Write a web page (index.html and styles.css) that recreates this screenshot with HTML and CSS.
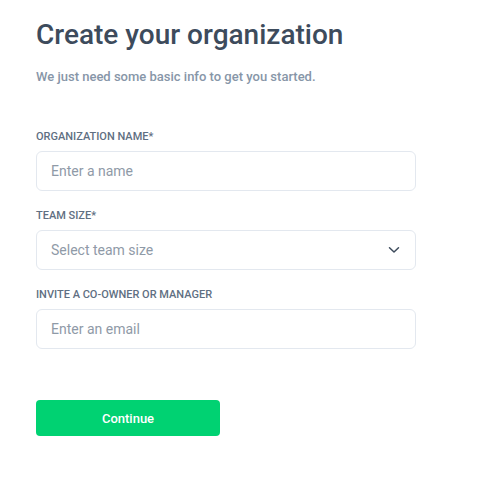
FILE: index.html
```html
<!DOCTYPE html>
<html>
<head>
<meta charset="utf-8">
<link rel="stylesheet" href="styles.css">
</head>
<body>
<main class="page">
  <h1 class="title">Create your organization</h1>
  <p class="subtitle">We just need some basic info to get you started.</p>
  <form class="form">
    <div class="field">
      <label class="label">Organization name*</label>
      <div class="input"><span class="placeholder">Enter a name</span></div>
    </div>
    <div class="field">
      <label class="label">Team size*</label>
      <div class="input select">
        <span class="placeholder">Select team size</span>
        <svg class="chevron" width="12" height="8" viewBox="0 0 12 8"><path d="M1.5 1.8 L6 6 L10.5 1.8" fill="none" stroke="#3d4b5c" stroke-width="1.5" stroke-linecap="round" stroke-linejoin="round"/></svg>
      </div>
    </div>
    <div class="field">
      <label class="label">Invite a co-owner or manager</label>
      <div class="input"><span class="placeholder">Enter an email</span></div>
    </div>
    <button type="button" class="btn">Continue</button>
  </form>
</main>
</body>
</html>
```
FILE: styles.css
```css
* { box-sizing: border-box; }
html, body { margin: 0; background: #fff; }
body { font-family: Roboto, "Liberation Sans", sans-serif; }
.page { padding: 16px 0 0 36px; width: 416px; }
.title {
  margin: 0;
  font-size: 28px;
  line-height: 38px;
  font-weight: 500;
  color: #3d4b5c;
}
.subtitle {
  margin: 15px 0 0;
  font-size: 13px;
  line-height: 16px;
  color: #8796a8;
  font-weight: 500;
}
.form { margin-top: 43px; display: flex; flex-direction: column; }
.field { display: flex; flex-direction: column; margin-bottom: 16px; }
.label {
  font-size: 11px;
  line-height: 18px;
  font-weight: 500;
  text-transform: uppercase;
  color: #5f6f82;
  margin-bottom: 5px;
}
.input {
  height: 40px;
  border: 1px solid #e3e8ef;
  border-radius: 6px;
  display: flex;
  align-items: center;
  padding: 0 14px;
  justify-content: space-between;
}
.placeholder { font-size: 14px; color: #8f9aa7; }
.chevron { margin-right: 1px; }
.btn {
  margin-top: 35px;
  width: 184px;
  height: 36px;
  border: none;
  border-radius: 4px;
  background: #00d272;
  color: #fff;
  font-family: inherit;
  font-size: 13px;
  font-weight: 500;
}
```
